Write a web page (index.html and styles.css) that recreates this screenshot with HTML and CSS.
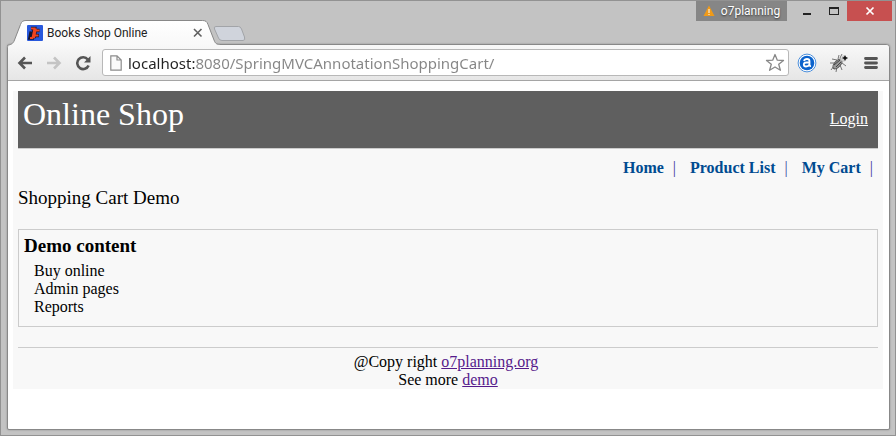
FILE: index.html
```html
<!DOCTYPE html>
<html lang="en">
<head>
<meta charset="utf-8">
<title>Books Shop Online</title>
<link rel="stylesheet" href="styles.css">
</head>
<body>
<div class="window">
  <div class="titlebar">
    <div class="tab">
      <svg class="tab-shape" viewBox="0 0 214 26" preserveAspectRatio="none" aria-hidden="true">
        <defs><linearGradient id="tabfill" x1="0" y1="0" x2="0" y2="1"><stop offset="0" stop-color="#fff"/><stop offset="1" stop-color="#f8f8f8"/></linearGradient></defs>
        <path d="M0 26V25.500C4 24.500 6 24 7.500 20L13.500 4.500C14.500 1.500 16 .5 19 .5H195.500C198.500 .5 200 1.500 201 4.500L207 20C208.500 24 210 24.500 214 24.500V26Z" fill="url(#tabfill)"/>
        <path d="M0 25.500C4 24.500 6 24 7.500 20L13.500 4.500C14.500 1.500 16 .5 19 .5H195.500C198.500 .5 200 1.500 201 4.500L207 20C208.500 24 210 24.500 214 24.500" fill="none" stroke="#888"/>
      </svg>
      <svg class="favicon" viewBox="0 0 16 16" aria-hidden="true">
        <rect width="16" height="16" rx="1" fill="#2858dc"/>
        <path d="M4 3.500H7.500L5.500 13H3L4.300 6.500M8.500 3.500L7 13M8.500 5.500H12.500M8 10.500H12" fill="none" stroke="#151530" stroke-width="3.600"/>
        <path d="M4 3.500H7.500L5.500 13H3M8.800 3.500L7 13M8.500 5.500H12.500M8 10.500H11.500" fill="none" stroke="#f04420" stroke-width="2"/>
      </svg>
      <span class="tab-title">Books Shop Online</span>
      <button class="tab-close" aria-label="Close tab"><svg width="10" height="10" viewBox="0 0 10 10"><path d="M1 1l7.500 7.500M8.500 1L1 8.500" stroke="#606060" stroke-width="1.600"/></svg></button>
    </div>
    <button class="new-tab" aria-label="New tab">
      <svg width="34" height="17" viewBox="0 0 34 17"><path d="M3 1.500H25.500Q27.500 1.500 28.500 4L31.500 12Q32.500 15.500 30 15.500H9Q6.500 15.500 5.500 13L1.500 4Q.5 1.500 3 1.500Z" fill="#d0d4dc" stroke="#a2a4a8"/></svg>
    </button>
    <div class="controls">
      <button class="profile">
        <svg width="12" height="12" viewBox="0 0 12 12" aria-hidden="true"><path d="M6 .5L11.500 11H.5Z" fill="#f09a18"/><path d="M6 4v4M6 9v1" stroke="#fff"/></svg>
        o7planning
      </button>
      <button class="win-btn" aria-label="Minimize"><svg width="10" height="10" viewBox="0 0 10 10"><path d="M1 8h8" stroke="#222" stroke-width="2"/></svg></button>
      <button class="win-btn" aria-label="Maximize"><svg width="10" height="10" viewBox="0 0 10 10"><path d="M0 1h10v8H0zM1 3v5h8V3z" fill="#222" fill-rule="evenodd"/></svg></button>
      <button class="win-close" aria-label="Close"><svg width="10" height="10" viewBox="0 0 10 10"><path d="M1.500 1.500l7 7M8.500 1.500l-7 7" stroke="#fff" stroke-width="1.700"/></svg></button>
    </div>
  </div>
  <div class="client">
    <div class="toolbar">
      <button class="tool" aria-label="Back"><svg width="16" height="14" viewBox="0 0 16 14"><path d="M15 7H3M8 1.500L2.500 7L8 12.500" fill="none" stroke="#555" stroke-width="2.600"/></svg></button>
      <button class="tool" aria-label="Forward"><svg width="16" height="14" viewBox="0 0 16 14"><path d="M1 7H13M8 1.500L13.500 7L8 12.500" fill="none" stroke="#c4c4c4" stroke-width="2.600"/></svg></button>
      <button class="tool" aria-label="Reload"><svg width="16" height="16" viewBox="0 0 16 16"><path d="M12.800 4.500A5.900 5.900 0 1 0 13.600 10.500" fill="none" stroke="#555" stroke-width="2.600"/><path d="M15.500 1v6.500H9z" fill="#555"/></svg></button>
      <div class="omnibox">
        <svg width="12" height="16" viewBox="0 0 12 16" aria-hidden="true"><path d="M.8 .8H7L11.200 5V15.200H.8ZM7 .8V5H11.200" fill="#fafafa" stroke="#8c8c8c" stroke-width="1.200"/></svg>
        <input class="address" type="text" aria-label="Address" value="localhost:8080/SpringMVCAnnotationShoppingCart/">
        <button class="star" aria-label="Bookmark"><svg width="20" height="19" viewBox="0 0 20 19"><path d="M10 1.500L12.300 7.200L18.500 7.500L13.700 11.300L15.400 17.300L10 14L4.600 17.300L6.300 11.300L1.500 7.500L7.700 7.200Z" fill="#fff" stroke="#888" stroke-width="1.300" stroke-linejoin="round"/></svg></button>
      </div>
      <button class="ext" aria-label="Extension"><svg width="20" height="20" viewBox="0 0 20 20"><circle cx="10" cy="10" r="8.900" fill="#fff" stroke="#4b8fdc"/><circle cx="10" cy="10" r="7.300" fill="#0a62cc"/><path d="M7 8Q7.500 6 10 6Q12.500 6 12.500 8.300V12Q12.500 13.200 14 13M12.500 9.500H9.500Q6.800 9.500 6.800 11.500Q6.800 13.500 9 13.500Q11.500 13.500 12.500 11.500" fill="none" stroke="#fff" stroke-width="1.800"/></svg></button>
      <button class="ext" aria-label="Debugger"><svg width="20" height="20" viewBox="0 0 20 20"><path d="M8 7L3 6M6 10L1 10M5 13L2 17M8 14L7 19M11 12L13 17M13 10L17 13M9 6L10 2M11 5L13 1" stroke="#777" fill="none"/><ellipse cx="8.500" cy="11" rx="3" ry="6" transform="rotate(42 8.500 11)" fill="#999" stroke="#555"/><path d="M5 12l6-5M7 14l5-5" stroke="#444"/><path d="M11 7L14 2L19 5L15 9Z" fill="#ccc"/><path d="M16 2l1 2 2 1-2 1-1 2-1-2-2-1 2-1z" fill="#111"/></svg></button>
      <button class="ext" aria-label="Menu"><svg width="14" height="14" viewBox="0 0 14 14"><path d="M1.500 2.500h11M1.500 7h11M1.500 11.500h11" stroke="#555" stroke-width="2.800" stroke-linecap="round"/></svg></button>
    </div>
    <div class="viewport">
      <div class="page">
        <header class="shop-header">
          <div class="site-name">Online Shop</div>
          <a class="login" href="#login">Login</a>
        </header>
        <nav class="menu">
          <a href="#home">Home</a><span class="bar">|</span>
          <a href="#products">Product List</a><span class="bar">|</span>
          <a href="#cart">My Cart</a><span class="bar">|</span>
        </nav>
        <div class="page-title">Shopping Cart Demo</div>
        <section class="demo">
          <h3>Demo content</h3>
          <ul>
            <li>Buy online</li>
            <li>Admin pages</li>
            <li>Reports</li>
          </ul>
        </section>
        <footer class="footer">
          @Copy right <a href="#o7planning">o7planning.org</a>&nbsp;<br>
          See more <a href="#demo">demo</a>
        </footer>
      </div>
    </div>
  </div>
</div>
</body>
</html>
```
FILE: styles.css
```css
* { box-sizing: border-box; }
body { margin: 0; }
button {
  display: flex;
  align-items: center;
  justify-content: center;
  padding: 0;
  border: 0;
  background: none;
  font: inherit;
}
svg { display: block; flex: none; }

.window {
  display: flex;
  flex-direction: column;
  min-height: 100vh;
  padding: 0 5px 5px 6px;
  border: 1px solid #929292;
  background: #c3c3c3;
  font-family: "Noto Sans", sans-serif;
}

.titlebar { display: flex; height: 43px; }
.tab {
  position: relative;
  z-index: 1;
  display: flex;
  align-items: center;
  width: 214px;
  height: 26px;
  margin-top: 19px;
  padding: 0 16px 0 20px;
  color: #222;
}
.tab-shape { position: absolute; inset: 0; width: 100%; height: 100%; }
.favicon { position: relative; width: 16px; height: 16px; }
.tab-title { position: relative; flex: 1; margin-left: 4px; white-space: nowrap; font-family: Roboto, sans-serif; font-size: 12px; }
.tab-close { position: relative; width: 14px; height: 14px; }
.new-tab { align-self: flex-start; margin: 24px 0 0 -8px; }

.controls { display: flex; height: 20px; margin-left: auto; }
.profile {
  gap: 6px;
  width: 91px;
  margin-right: 6px;
  background: #868686;
  color: #fff;
  font-family: Roboto, sans-serif;
  font-size: 12px;
  text-shadow: 0 1px 2px #333;
}
.win-btn { width: 27px; }
.win-close { width: 45px; margin-right: -2px; background: #c75050; }

.client {
  display: flex;
  flex-direction: column;
  flex: 1;
  border: 1px solid #888;
  border-radius: 4px 4px 2px 2px;
  background: #fff;
  box-shadow: 0 0 2px #888;
}
.toolbar {
  display: flex;
  align-items: center;
  height: 36px;
  padding: 0 7px 0 9px;
  border-bottom: 1px solid #a5a5a5;
  border-radius: 3px 3px 0 0;
  background: linear-gradient(#f8f8f8, #e6e6e6);
}
.tool { width: 18px; height: 24px; margin-right: 11px; }
.tool:first-child { margin-left: -1px; }
.omnibox {
  display: flex;
  align-items: center;
  flex: 1;
  height: 27px;
  margin: 0 7px 0 -1px;
  padding: 0 3px 0 7px;
  border: 1px solid #b8b8b8;
  border-radius: 3px;
  background: #fff;
}
.address {
  flex: 1;
  min-width: 0;
  height: 24px;
  margin-left: 6px;
  padding: 0;
  border: 0;
  outline: 0;
  font: 15px "Noto Sans", sans-serif;
  color: transparent;
  background: linear-gradient(to right, #222 67px, #858585 67px);
  -webkit-background-clip: text;
  background-clip: text;
}
.ext { width: 22px; height: 24px; }
.ext + .ext { margin-left: 10px; }

.viewport { flex: 1; padding: 10px 6px 10px 5px; }
.page {
  padding: 0 5px;
  background: #f8f8f8;
  color: #000;
  font: 16px/18px "Liberation Serif", serif;
}
.shop-header {
  display: flex;
  justify-content: space-between;
  padding: 5px 10px 16px 5px;
  border-bottom: 1px solid #ccc;
  background: #5f5f5f;
  color: #fff;
}
.site-name { font-size: 32px; line-height: 36px; }
.login { margin-top: 14px; color: #fff; }
.menu {
  display: flex;
  justify-content: flex-end;
  padding: 10px 5px 0;
}
.menu a { color: #004b91; font-weight: bold; text-decoration: none; }
.bar { margin: 0 14px 0 9px; color: #3c3c9c; }
.bar:last-child { margin-right: 0; }
.page-title { margin: 10px 0 20px; font-size: 19px; line-height: 22px; }
.demo { padding: 5px 5px 10px; border: 1px solid #ccc; }
.demo h3 { margin: 0 0 5px; font-size: 19px; line-height: 22px; }
.demo ul { margin: 0; padding: 0 0 0 10px; list-style: none; }
.footer {
  margin-top: 20px;
  padding-top: 5px;
  border-top: 1px solid #ccc;
  text-align: center;
}
.footer a { color: #551a8b; }
```
